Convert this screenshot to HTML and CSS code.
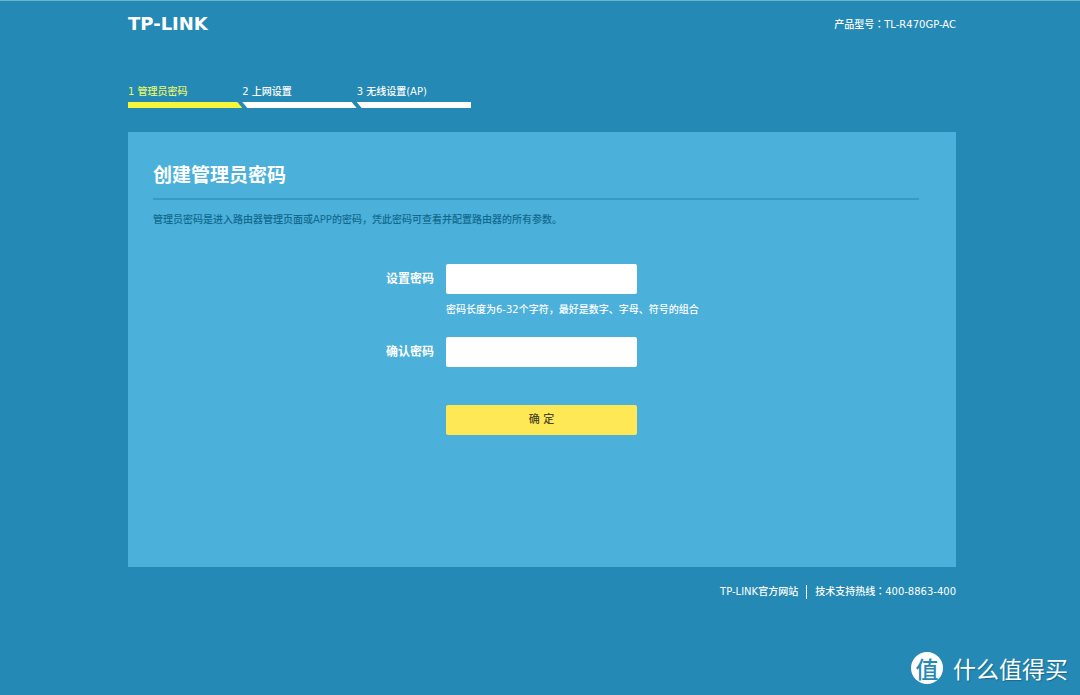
FILE: index.html
```html
<!DOCTYPE html>
<html lang="zh-CN">
<head>
<meta charset="utf-8">
<meta name="viewport" content="width=device-width, initial-scale=1">
<title>创建管理员密码</title>
<link rel="stylesheet" href="styles.css">
</head>
<body>
<div class="page">
  <header class="header">
    <div class="logo">TP-LINK</div>
    <div class="model">产品型号<span class="colon" lang="zh-TW">：</span>TL-R470GP-AC</div>
  </header>
  <ol class="steps">
    <li class="step step-active">1 管理员密码<span class="bar"></span></li>
    <li class="step">2 上网设置<span class="bar"></span></li>
    <li class="step">3 无线设置(AP)<span class="bar"></span></li>
  </ol>
  <main class="panel">
    <h1 class="title">创建管理员密码</h1>
    <p class="intro">管理员密码是进入路由器管理页面或APP的密码，凭此密码可查看并配置路由器的所有参数。</p>
    <form class="form">
      <label class="label" for="password">设置密码</label>
      <input class="field" id="password" type="password" aria-describedby="hint">
      <p class="hint" id="hint">密码长度为6-32个字符，最好是数字、字母、符号的组合</p>
      <label class="label" for="confirm">确认密码</label>
      <input class="field" id="confirm" type="password">
      <button class="submit" type="button">确 定</button>
    </form>
  </main>
  <footer class="footer">
    <a class="link" href="#">TP-LINK官方网站</a>
    <span class="hotline">技术支持热线<span class="colon" lang="zh-TW">：</span>400-8863-400</span>
  </footer>
</div>
<div class="watermark">
  <span class="seal">值</span>
  <span>什么值得买</span>
</div>
</body>
</html>
```
FILE: styles.css
```css
* {
  box-sizing: border-box;
}

body {
  margin: 0;
  min-height: 100vh;
  border-top: 1px solid #6fb2cb;
  background: #2489b4;
  color: #fff;
  font: 500 10px/16px "DejaVu Sans", "Noto Sans CJK SC", sans-serif;
}

.page {
  padding: 14px 124px 0 128px;
}

.header {
  display: flex;
  justify-content: space-between;
  align-items: center;
  height: 18px;
}

.logo {
  font: bold 18px/18px "DejaVu Sans", sans-serif;
}

.colon {
  font-family: "Noto Sans CJK TC", sans-serif;
}

.steps {
  display: grid;
  grid-template-columns: repeat(3, 1fr);
  width: 343px;
  margin: 51px 0 0;
  padding: 0;
  list-style: none;
}

.step-active {
  color: #e4f56a;
}

.bar {
  display: block;
  height: 6px;
  margin: 2px 0 0;
  background: #fff;
  clip-path: polygon(0 0, calc(100% - 5px) 0, 100% 100%, 5px 100%);
}

.step-active .bar {
  background: #f5f53c;
  clip-path: polygon(0 0, calc(100% - 5px) 0, 100% 100%, 0 100%);
}

.step:last-child .bar {
  clip-path: polygon(0 0, 100% 0, 100% 100%, 5px 100%);
}

.panel {
  margin-top: 24px;
  padding: 29px 37px 132px 25px;
  background: #4bb0da;
}

.title {
  margin: 0;
  padding-bottom: 9px;
  border-bottom: 2px solid #3899c4;
  font-size: 19px;
  font-weight: bold;
  line-height: 28px;
}

.intro {
  margin: 12px 0 0;
  color: #12698e;
}

.form {
  display: grid;
  grid-template-columns: 281px 191px;
  column-gap: 12px;
  align-items: center;
  margin-top: 36px;
}

.label {
  font-size: 12px;
  font-weight: bold;
  text-align: right;
}

.field {
  width: 100%;
  height: 30px;
  padding: 0 8px;
  border: 0;
  border-radius: 2px;
  background: #fff;
}

.hint {
  grid-column: 2;
  margin: 8px 0 19px;
  white-space: nowrap;
}

.submit {
  grid-column: 2;
  height: 30px;
  margin-top: 38px;
  padding: 0;
  border: 0;
  border-radius: 2px;
  background: #ffe855;
  color: #4d4826;
  font: 500 11px/16px "DejaVu Sans", "Noto Sans CJK SC", sans-serif;
}

.footer {
  display: flex;
  justify-content: flex-end;
  align-items: center;
  margin-top: 17px;
  line-height: 14px;
}

.link {
  padding-right: 8px;
  border-right: 1px solid #fff;
  color: inherit;
  text-decoration: none;
}

.hotline {
  padding-left: 8px;
}

.watermark {
  position: absolute;
  right: 12px;
  bottom: 11px;
  display: flex;
  align-items: center;
  gap: 10px;
  font: 23px/32px "Noto Sans CJK SC", sans-serif;
  text-shadow: 1px 1px 1px #176a8e;
}

.seal {
  width: 32px;
  height: 32px;
  border-radius: 50%;
  background: #fff;
  color: #2489b4;
  font-weight: 500;
  font-style: oblique 6deg;
  text-align: center;
  text-shadow: none;
}
```
